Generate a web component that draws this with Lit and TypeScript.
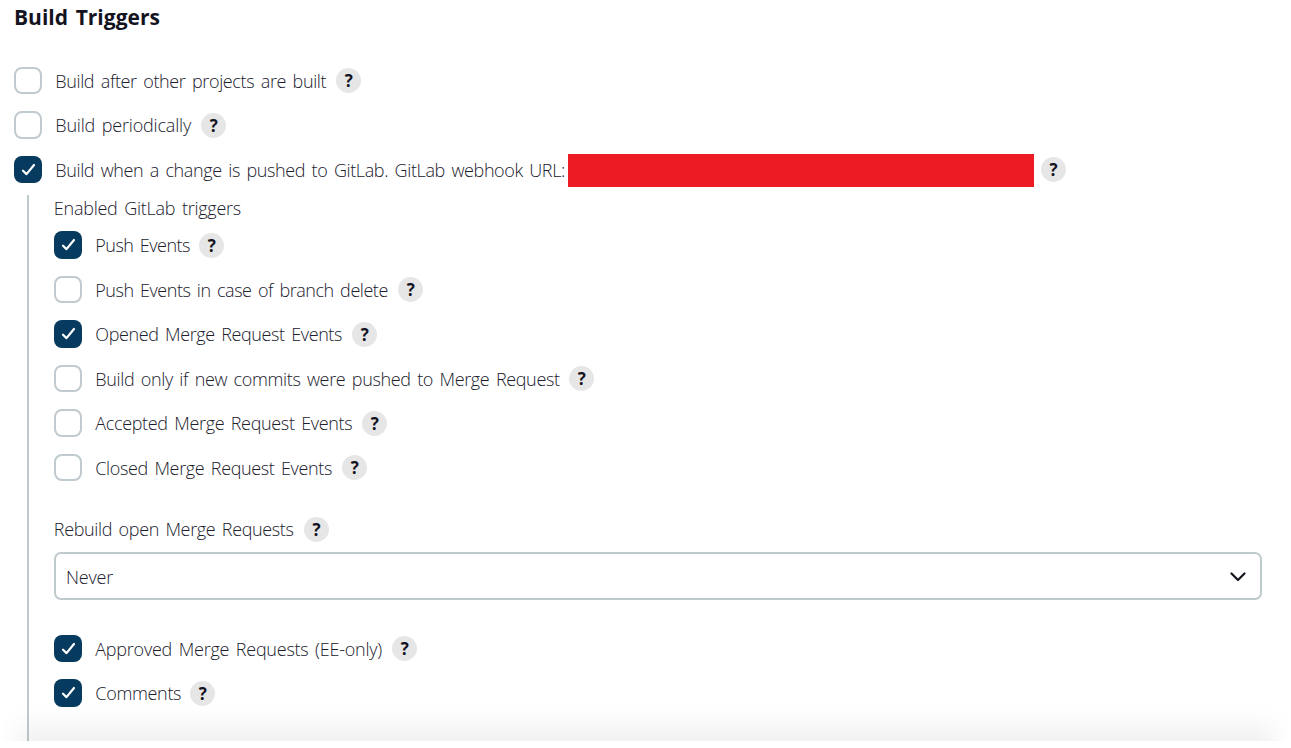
import { LitElement, html, css, nothing } from "lit";
import { customElement, property } from "lit/decorators.js";

interface Trigger {
  label: string;
  width: number;
  tracking: number;
  checked?: boolean;
}

@customElement("help-button")
class HelpButton extends LitElement {
  static styles = css`
    :host { display: flex; flex: none; }
    .help {
      display: flex; align-items: center; justify-content: center;
      box-sizing: border-box; width: 25px; height: 25px; padding: 0;
      border: 0; border-radius: 50%; background: #e6e6e6; color: #14141f;
      font: 700 17px/25px "Open Sans", sans-serif;
    }
  `;
  render() {
    return html`<button class="help" aria-label="Help">?</button>`;
  }
}

@customElement("check-row")
class CheckRow extends LitElement {
  @property({ attribute: false }) item!: Trigger;

  static styles = css`
    :host { display: flex; align-items: center; height: 27.3px; }
    .box {
      flex: none; display: flex; box-sizing: border-box; width: 28px; height: 27.3px;
      border: 2px solid #c0cacf; border-radius: 8px; background: #fff;
    }
    .on { border: 0; background: #063b5f; }
    .label {
      flex: none; margin-left: 13.3px; padding-top: 1px; white-space: nowrap;
      line-height: 26px; word-spacing: 2.2px;
    }
    help-button { margin: 0.5px 0 0 8.4px; }
  `;
  render() {
    const { label, width, tracking, checked } = this.item;
    return html`
      <span class="box ${checked ? "on" : ""}">${checked
        ? html`<svg width="28" height="28" viewBox="0 0 28 28" fill="none" stroke="#fff"
            stroke-width="2.2" stroke-linecap="round" stroke-linejoin="round">
            <path d="M9 14.7l3.5 3.4L20 9" /></svg>`
        : nothing}</span>
      <span class="label" style="width:${width}px;letter-spacing:${tracking}px">${label}</span>
      <slot></slot>
      <help-button></help-button>`;
  }
}

const projectTriggers: Trigger[] = [
  { label: "Build after other projects are built", width: 272.5, tracking: -0.37 },
  { label: "Build periodically", width: 137.5, tracking: -0.19 },
];

const webhookTrigger: Trigger = {
  label: "Build when a change is pushed to GitLab. GitLab webhook URL:",
  width: 510.7, tracking: -0.38, checked: true,
};

const eventTriggers: Trigger[] = [
  { label: "Push Events", width: 95.5, tracking: -0.5, checked: true },
  { label: "Push Events in case of branch delete", width: 294.5, tracking: -0.46 },
  { label: "Opened Merge Request Events", width: 248.5, tracking: -0.39, checked: true },
  { label: "Build only if new commits were pushed to Merge Request", width: 465.5, tracking: -0.36 },
  { label: "Accepted Merge Request Events", width: 258.5, tracking: -0.34 },
  { label: "Closed Merge Request Events", width: 238.5, tracking: -0.36 },
];

const extraTriggers: Trigger[] = [
  { label: "Approved Merge Requests (EE-only)", width: 288.5, tracking: -0.24, checked: true },
  { label: "Comments", width: 86.5, tracking: -0.32, checked: true },
];

const rows = (items: Trigger[]) => items.map((t) => html`<check-row .item=${t}></check-row>`);

@customElement("app-root")
class AppRoot extends LitElement {
  static styles = css`
    :host {
      display: block; position: relative; height: 748px; overflow: hidden;
      background: #fff; color: #20202d; font: 300 18px/26px "Open Sans", sans-serif;
    }
    .page { display: flex; flex-direction: column; height: 741px; overflow: hidden; padding-left: 14px; }
    .title {
      margin: 0; height: 66.8px; box-sizing: border-box; padding-top: 3px; flex: none;
      font-size: 21px; line-height: 28px; font-weight: 700; word-spacing: 2.2px; color: #14141f;
    }
    .list { display: flex; flex-direction: column; gap: 17.2px; flex: none; }
    .redacted { flex: none; width: 466px; height: 33px; margin: 2px -1.4px 0 2px; background: #ed1c24; }
    .nested {
      flex: 1 0 auto; box-sizing: border-box; margin: 11.9px 29px 0 13px; padding-left: 25px;
      border-left: 2px solid #bfcacd;
    }
    .caption {
      display: flex; align-items: center; gap: 8.8px; margin-left: -0.2px;
      word-spacing: 2.2px; letter-spacing: -0.25px; height: 26px;
    }
    .first { height: 36.4px; box-sizing: border-box; align-items: flex-start; }
    .rebuild { margin-top: 35.9px; height: 25px; }
    .text { width: 241.4px; letter-spacing: -0.36px; }
    .select {
      display: flex; align-items: center; justify-content: space-between; box-sizing: border-box;
      height: 48px; margin: 10px 0 34.9px; padding: 2px 14px 0 10px; letter-spacing: -0.2px;
      border: 2px solid #bfcacd; border-radius: 7px;
    }
    .chevron { margin-top: 0.5px; }
    .shade {
      position: absolute; left: 0; right: 0; bottom: 7px; height: 38px; pointer-events: none;
      background: linear-gradient(transparent, rgba(0,0,0,.006) 30%, rgba(0,0,0,.03) 65%, rgba(0,0,0,.052));
      mask-image: linear-gradient(to right, transparent, #000 34px, #000 calc(100% - 34px), transparent);
    }
  `;
  render() {
    return html`
      <main class="page">
        <h2 class="title">Build Triggers</h2>
        <div class="list">
          ${rows(projectTriggers)}
          <check-row .item=${webhookTrigger}><div class="redacted"></div></check-row>
        </div>
        <section class="nested">
          <div class="caption first">Enabled GitLab triggers</div>
          <div class="list">${rows(eventTriggers)}</div>
          <div class="caption rebuild">
            <span class="text">Rebuild open Merge Requests</span>
            <help-button></help-button>
          </div>
          <div class="select">
            <span>Never</span>
            <svg class="chevron" width="16" height="10" viewBox="0 0 16 10" fill="none" stroke="#14141f"
              stroke-width="2.2" stroke-linecap="round" stroke-linejoin="round">
              <path d="M1.5 1.5L8 8l6.5-6.5" /></svg>
          </div>
          <div class="list">${rows(extraTriggers)}</div>
        </section>
      </main>
      <div class="shade"></div>
    `;
  }
}
